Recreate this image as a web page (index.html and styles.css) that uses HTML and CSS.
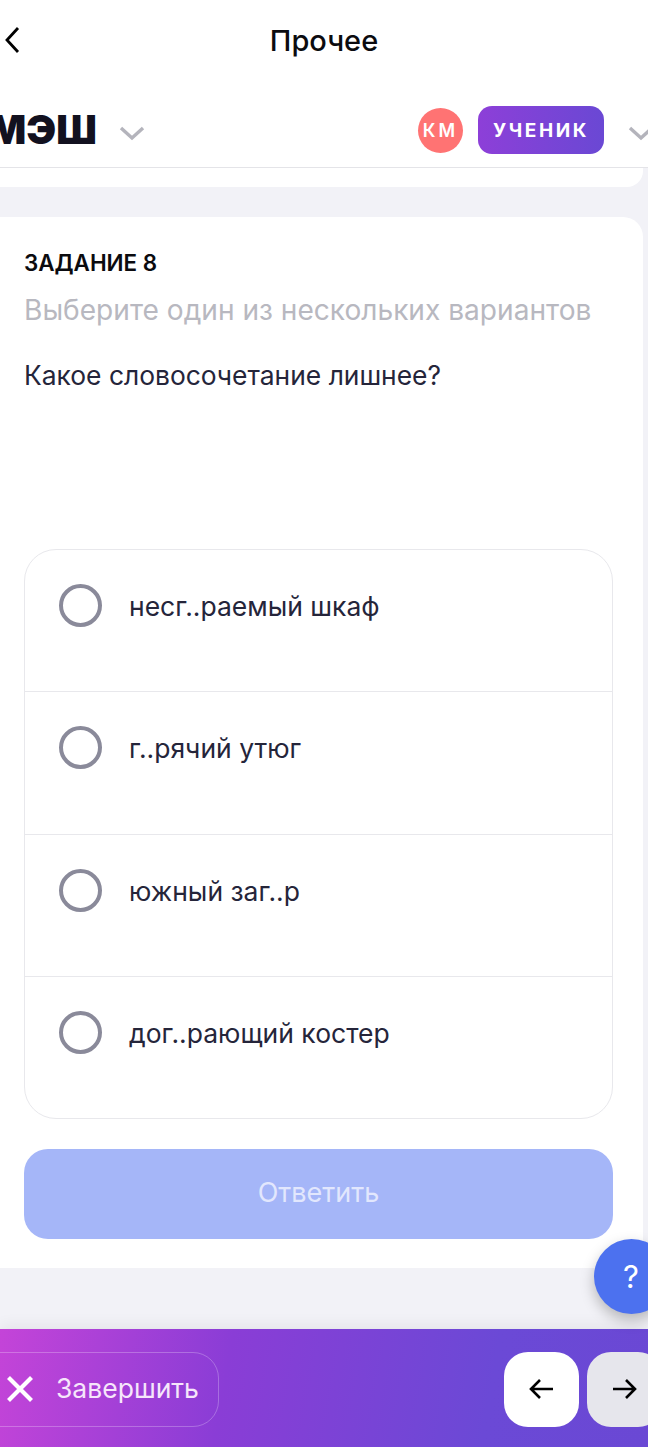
FILE: index.html
```html
<!DOCTYPE html>
<html lang="ru">
  <head>
    <meta charset="UTF-8" />
    <meta name="viewport" content="width=device-width, initial-scale=1.0" />
    <title>Прочее</title>
    <link rel="stylesheet" href="styles.css">
  </head>
  <body>
    <div class="page">
      <div class="topbar">
        <svg class="back" width="20" height="30" viewBox="0 0 20 30">
          <path d="M16 3 L5 15 L16 27" fill="none" stroke="#000" stroke-width="2.8" />
        </svg>
        <h1>Прочее</h1>
      </div>
      <div class="nav">
        <span class="logo">МЭШ</span>
        <svg class="chevron logo-chevron" width="26" height="16" viewBox="0 0 26 16">
          <path d="M2 3 L13 13 L24 3" fill="none" stroke="#b4b4bc" stroke-width="3.4" />
        </svg>
        <span class="avatar">КМ</span>
        <span class="role">УЧЕНИК</span>
        <svg class="chevron role-chevron" width="26" height="16" viewBox="0 0 26 16">
          <path d="M2 3 L13 13 L24 3" fill="none" stroke="#b4b4bc" stroke-width="3.4" />
        </svg>
      </div>
      <div class="content">
        <div class="prev-card"></div>
        <div class="card">
          <div class="task-num">ЗАДАНИЕ 8</div>
          <div class="hint">Выберите один из нескольких вариантов</div>
          <div class="question">Какое словосочетание лишнее?</div>
          <div class="options">
            <div class="option"><span class="radio"></span><span>несг..раемый шкаф</span></div>
            <div class="option"><span class="radio"></span><span>г..рячий утюг</span></div>
            <div class="option"><span class="radio"></span><span>южный заг..р</span></div>
            <div class="option"><span class="radio"></span><span>дог..рающий костер</span></div>
          </div>
          <button class="answer" type="button">Ответить</button>
        </div>
      </div>
      <div class="help">?</div>
      <div class="footer">
        <div class="finish">
          <svg width="28" height="28" viewBox="0 0 28 28">
            <path d="M2.5 2.5 L25.5 25.5 M25.5 2.5 L2.5 25.5" fill="none" stroke="#fff" stroke-width="4.2" />
          </svg>
          <span class="finish-label">Завершить</span>
        </div>
        <div class="arrows">
          <div class="arrow">
            <svg width="26" height="22" viewBox="0 0 26 22">
              <path d="M24 11 H2 M11 2 L2 11 L11 20" fill="none" stroke="#000" stroke-width="2.6" />
            </svg>
          </div>
          <div class="arrow next">
            <svg width="26" height="22" viewBox="0 0 26 22">
              <path d="M1 11 H23 M14 2 L23 11 L14 20" fill="none" stroke="#000" stroke-width="2.6" />
            </svg>
          </div>
        </div>
      </div>
    </div>
  </body>
</html>
```

FILE: styles.css
```css
html,
body {
  margin: 0;
  padding: 0;
}
body {
  font-family: "Inter", "Noto Sans", sans-serif;
  background: #f2f2f7;
  overflow: hidden;
}
.page {
  position: relative;
  width: 648px;
  height: 1447px;
  display: flex;
  flex-direction: column;
  overflow: hidden;
}
.topbar {
  height: 81px;
  background: #ffffff;
  display: flex;
  align-items: center;
  justify-content: center;
  position: relative;
}
.back {
  position: absolute;
  left: 2px;
  top: 25px;
}
h1 {
  margin: 0;
  font-size: 29px;
  font-weight: 500;
  color: #0b0b0f;
}
.nav {
  height: 86px;
  background: #ffffff;
  border-bottom: 1px solid #e4e4e8;
  display: flex;
  align-items: center;
  flex-shrink: 0;
}
.logo {
  margin-left: -12px;
  margin-top: 10px;
  font-size: 40px;
  font-weight: 900;
  color: #12111f;
}
.logo-chevron {
  margin-left: 22px;
  margin-top: 18px;
}
.avatar {
  margin-left: auto;
  margin-top: 12px;
  width: 45px;
  height: 45px;
  border-radius: 50%;
  background: #ff7373;
  color: #ffffff;
  font-size: 18px;
  font-weight: 600;
  letter-spacing: 3px;
  display: flex;
  align-items: center;
  justify-content: center;
}
.role {
  margin-left: 15px;
  margin-top: 12px;
  width: 126px;
  height: 48px;
  border-radius: 14px;
  background: linear-gradient(90deg, #8d3fd8, #6a48d4);
  color: #ffffff;
  font-size: 19px;
  font-weight: 700;
  letter-spacing: 2.6px;
  display: flex;
  align-items: center;
  justify-content: center;
}
.role-chevron {
  margin-left: 24px;
  margin-right: -6px;
  margin-top: 18px;
}
.content {
  flex: 1;
  display: flex;
  flex-direction: column;
}
.prev-card {
  height: 19px;
  margin-left: -20px;
  width: 663px;
  background: #ffffff;
  border-radius: 0 0 16px 16px;
}
.card {
  margin-top: 30px;
  margin-left: -20px;
  width: 663px;
  height: 1051px;
  box-sizing: border-box;
  padding: 32px 30px 30px 44px;
  background: #ffffff;
  border-radius: 20px;
}
.task-num {
  font-size: 22.4px;
  font-weight: 600;
  line-height: 28px;
  color: #0b0b0f;
}
.hint {
  margin-top: 16px;
  font-size: 28.1px;
  line-height: 34px;
  color: #b8b8c0;
}
.question {
  margin-top: 31px;
  font-size: 26.4px;
  line-height: 34px;
  color: #25253a;
}
.options {
  margin-top: 157px;
  border: 1px solid #e8e8ec;
  border-radius: 32px;
  height: 570px;
  box-sizing: border-box;
  display: flex;
  flex-direction: column;
}
.option {
  flex: 1;
  display: flex;
  align-items: flex-start;
  padding: 34px 0 0 34px;
  border-bottom: 1px solid #e8e8ec;
  font-size: 26.5px;
  line-height: 44px;
  color: #25253a;
}
.option:last-child {
  border-bottom: 0;
}
.radio {
  width: 43px;
  height: 43px;
  box-sizing: border-box;
  border: 4px solid #8a8a9a;
  border-radius: 50%;
  margin-right: 27px;
  flex-shrink: 0;
}
.answer {
  display: block;
  width: 100%;
  height: 90px;
  margin-top: 30px;
  padding-bottom: 5px;
  border: 0;
  border-radius: 24px;
  background: #a5b6f8;
  color: #e2e7fd;
  font-family: inherit;
  font-size: 27px;
}
.help {
  position: absolute;
  left: 594px;
  top: 1239px;
  width: 75px;
  height: 75px;
  border-radius: 50%;
  background: #4c71ef;
  box-shadow: 0 6px 14px rgba(0, 0, 0, 0.25);
  color: #ffffff;
  font-size: 31px;
  line-height: 75px;
  padding-left: 29px;
  box-sizing: border-box;
}
.footer {
  height: 118px;
  background: linear-gradient(100deg, #c444d8, #8a3dd6 35%, #6b49d6 75%, #6a48d4);
  display: flex;
  align-items: center;
  justify-content: space-between;
  box-shadow: 0 -4px 14px rgba(0, 0, 0, 0.06);
  flex-shrink: 0;
  padding-top: 2px;
  box-sizing: border-box;
}
.finish {
  margin-left: -30px;
  width: 249px;
  height: 75px;
  box-sizing: border-box;
  border: 1px solid rgba(255, 255, 255, 0.25);
  border-radius: 26px;
  display: flex;
  align-items: center;
  gap: 22px;
  padding-left: 35px;
  color: #f6e6fb;
  font-size: 26.5px;
}
.finish-label {
  margin-bottom: 2px;
}
.arrows {
  display: flex;
  gap: 8px;
  margin-right: -14px;
}
.arrow {
  width: 75px;
  height: 75px;
  border-radius: 24px;
  background: #ffffff;
  display: flex;
  align-items: center;
  justify-content: center;
}
.arrow.next {
  background: #e6e6ec;
}
```
